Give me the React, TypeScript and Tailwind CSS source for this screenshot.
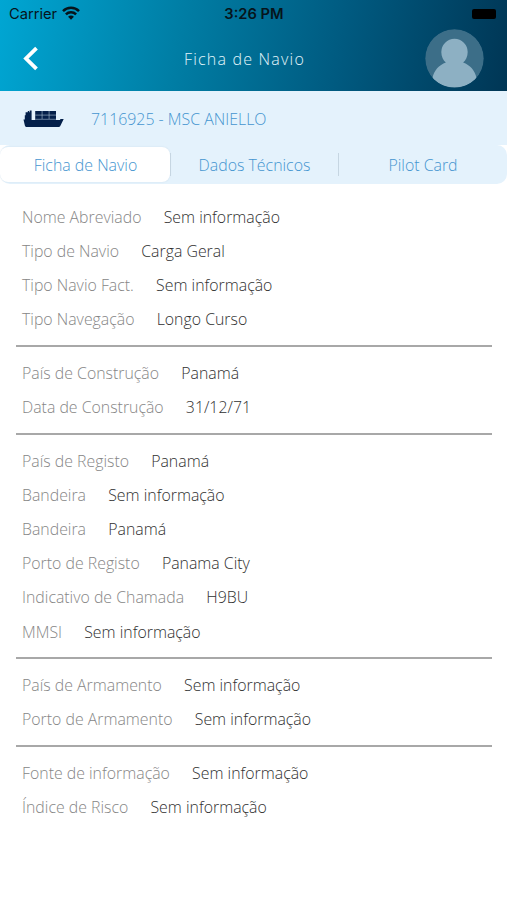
import { clsx } from 'clsx'

type Field = { label: string; value: string }

const EMPTY = 'Sem informação'

const TABS = ['Ficha de Navio', 'Dados Técnicos', 'Pilot Card']

const SECTIONS: Field[][] = [
  [
    { label: 'Nome Abreviado', value: EMPTY },
    { label: 'Tipo de Navio', value: 'Carga Geral' },
    { label: 'Tipo Navio Fact.', value: EMPTY },
    { label: 'Tipo Navegação', value: 'Longo Curso' },
  ],
  [
    { label: 'País de Construção', value: 'Panamá' },
    { label: 'Data de Construção', value: '31/12/71' },
  ],
  [
    { label: 'País de Registo', value: 'Panamá' },
    { label: 'Bandeira', value: EMPTY },
    { label: 'Bandeira', value: 'Panamá' },
    { label: 'Porto de Registo', value: 'Panama City' },
    { label: 'Indicativo de Chamada', value: 'H9BU' },
    { label: 'MMSI', value: EMPTY },
  ],
  [
    { label: 'País de Armamento', value: EMPTY },
    { label: 'Porto de Armamento', value: EMPTY },
  ],
  [
    { label: 'Fonte de informação', value: EMPTY },
    { label: 'Índice de Risco', value: EMPTY },
  ],
]

function WifiIcon() {
  return (
    <svg className="-mt-px" width="18" height="14" viewBox="0 0 18 14" fill="none" stroke="#06141b" strokeWidth="2.5">
      <path d="M1 5.1a11.3 11.3 0 0 1 16 0" />
      <path d="M3.9 8.4a7.2 7.2 0 0 1 10.2 0" />
      <path d="M6.1 10.8a3.9 3.9 0 0 1 5.8 0L9 13.8z" fill="#06141b" stroke="none" />
    </svg>
  )
}

function ShipIcon() {
  return (
    <svg className="mt-px" width="41" height="18" viewBox="0 0 41 18" fill="#04204a">
      <path d="M2.6 2.2h2.2V1.1h1.3v1.1h.6V.5h1.9v9.5h28.3l.6-1.1h3.2L39 12.5l-1.6 3.3c-.5 1-1.2 1.3-2.3 1.3H4.3c-1.5 0-2.2-.6-2.5-1.9L.5 9.4h1.3V5.3h.8z" />
      {/* containers, with their seams drawn over the block */}
      <path d="M12.2 1H33v9.2H12.2z" />
      <path d="M12.2 5.1H33M19.1 1v8M26.1 1v8M12.2 9.3H33" stroke="#a9bfd2" strokeWidth=".6" />
    </svg>
  )
}

function Avatar() {
  return (
    <svg width="59" height="59" viewBox="0 0 59 59">
      <defs>
        <clipPath id="avatar">
          <circle cx="29.5" cy="29.5" r="29.2" />
        </clipPath>
      </defs>
      <g clipPath="url(#avatar)">
        <circle cx="29.5" cy="29.5" r="29.5" fill="#3c6e88" />
        <path
          d="M29.5 9.8a13.2 13.2 0 0 0-13.2 13.2c0 4.7 2 8.3 4.6 10.6C14 36 9 41.7 7.5 49c5.5 6 13 9.3 22 9.3S46 55 51.5 49C50 41.7 45 36 38.1 33.6c2.6-2.3 4.6-5.9 4.6-10.6A13.2 13.2 0 0 0 29.5 9.8z"
          fill="#8db0c3"
        />
      </g>
    </svg>
  )
}

function Header() {
  return (
    <header className="h-[91px] bg-[linear-gradient(100deg,#00a6d3_0%,#007ea5_35%,#005a80_67%,#003655_100%)]">
      <div className="h-7 grid grid-cols-3 items-center pl-[9px] pr-[11px] font-['Inter'] text-[#06141b]">
        <div className="flex items-center gap-[5px] text-[14.7px] font-normal">
          Carrier
          <WifiIcon />
        </div>
        <span className="pl-[3px] text-center text-[14.7px] font-semibold">3:26 PM</span>
        <div className="justify-self-end w-[24px] h-[10px] rounded-[2px] bg-black" />
      </div>
      <div className="h-[61px] flex items-center justify-between pl-[22px] pr-[23px]">
        <div className="w-[42px]">
          <svg width="17" height="25" viewBox="0 0 17 25" fill="none" stroke="white" strokeWidth="3.8">
            <path d="M14.5 2.2 4 12.5l10.5 10.3" />
          </svg>
        </div>
        <h1 className="text-[16px] tracking-[1.2px] text-[#e2f5fb]">Ficha de Navio</h1>
        <Avatar />
      </div>
    </header>
  )
}

function Tabs() {
  return (
    <nav className="h-[39px] flex items-center rounded-[10px] bg-[#e4f2fc] text-[#4595d0]">
      {TABS.map((tab, i) => (
        <div
          key={tab}
          className={clsx(
            'flex items-center justify-center pt-[2px] text-[15.9px]',
            i === 0 && 'w-[170px] h-[35px] pl-px rounded-[8px] bg-white shadow-[0_0_2px_rgba(0,60,100,0.1)]',
            i === 1 && 'w-[169px] h-[23px] border-x border-[#c6d6e2]',
            i === 2 && 'flex-1',
          )}
        >
          {tab}
        </div>
      ))}
    </nav>
  )
}

function Section({ fields }: { fields: Field[] }) {
  return (
    <section className="px-[6px] pt-[9.9px] pb-[7.5px] border-b-2 border-[#a8a8a8] last:border-b-0">
      {fields.map((field, i) => (
        <div key={i} className="h-[34.2px] flex items-center gap-[22.2px] text-[15.87px] whitespace-nowrap">
          <span className="text-[#868686]">{field.label}</span>
          <span className="text-[#303030]">{field.value}</span>
        </div>
      ))}
    </section>
  )
}

export default function App() {
  return (
    <div className="w-full h-[900px] overflow-hidden bg-white font-['Open_Sans',sans-serif] font-light">
      <Header />
      <div className="h-[54px] flex items-center gap-[27px] pl-[23px] bg-[#e4f2fc]">
        <ShipIcon />
        <span className="pt-[3px] text-[15.9px] text-[#4595d0]">7116925 - MSC ANIELLO</span>
      </div>
      <Tabs />
      <main className="pl-4 pr-[15px] pt-[6.6px]">
        {SECTIONS.map((fields, i) => (
          <Section key={i} fields={fields} />
        ))}
      </main>
    </div>
  )
}
